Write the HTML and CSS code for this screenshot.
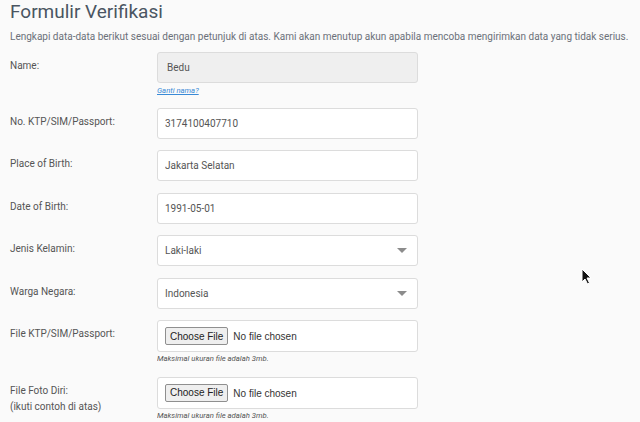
FILE: index.html
```html
<!DOCTYPE html>
<html lang="id">
<head>
<meta charset="utf-8">
<title>Formulir Verifikasi</title>
<link rel="stylesheet" href="styles.css">
</head>
<body>
<div class="page">
  <h1 class="title">Formulir Verifikasi</h1>
  <p class="lead">Lengkapi data-data berikut sesuai dengan petunjuk di atas. Kami akan menutup akun apabila mencoba mengirimkan data yang tidak serius.</p>
  <form class="form">
    <div class="row">
      <label class="label">Name:</label>
      <div class="field">
        <input class="input readonly" type="text" value="Bedu" readonly>
        <a class="help-link" href="#">Ganti nama?</a>
      </div>
    </div>
    <div class="row">
      <label class="label">No. KTP/SIM/Passport:</label>
      <div class="field"><input class="input" type="text" value="3174100407710"></div>
    </div>
    <div class="row">
      <label class="label">Place of Birth:</label>
      <div class="field"><input class="input" type="text" value="Jakarta Selatan"></div>
    </div>
    <div class="row">
      <label class="label">Date of Birth:</label>
      <div class="field"><input class="input" type="text" value="1991-05-01"></div>
    </div>
    <div class="row">
      <label class="label">Jenis Kelamin:</label>
      <div class="field">
        <div class="select"><span>Laki-laki</span><i class="caret"></i></div>
      </div>
    </div>
    <div class="row">
      <label class="label">Warga Negara:</label>
      <div class="field">
        <div class="select"><span>Indonesia</span><i class="caret"></i></div>
      </div>
    </div>
    <div class="row">
      <label class="label">File KTP/SIM/Passport:</label>
      <div class="field">
        <div class="filebox"><input type="file" class="file"></div>
        <div class="help">Maksimal ukuran file adalah 3mb.</div>
      </div>
    </div>
    <div class="row">
      <label class="label">File Foto Diri:<br>(ikuti contoh di atas)</label>
      <div class="field">
        <div class="filebox"><input type="file" class="file"></div>
        <div class="help">Maksimal ukuran file adalah 3mb.</div>
      </div>
    </div>
  </form>
</div>
<svg class="cursor" width="12" height="18" viewBox="0 0 12 18"><path d="M1 1 L1 14 L4 11 L6.5 16 L8.5 15 L6 10 L10 10 Z" fill="#111" stroke="#fff" stroke-width="1"/></svg>
</body>
</html>
```

FILE: styles.css
```css
html, body {
  margin: 0;
  padding: 0;
  background: #fafafa;
}
body {
  font-family: Roboto, "Noto Sans", sans-serif;
  font-size: 10px;
  color: #555;
  width: 640px;
  height: 422px;
  overflow: hidden;
  position: relative;
}
.page {
  padding: 0 10px;
}
.title {
  margin: 0;
  padding-top: 1px;
  font-size: 19px;
  line-height: 22px;
  font-weight: 400;
  color: #4a5562;
}
.lead {
  margin: 6px 0 0;
  font-size: 10px;
  line-height: 16px;
  color: #6b7079;
}
.form {
  margin-top: 7px;
  display: flex;
  flex-direction: column;
  gap: 11.5px;
}
.row {
  display: grid;
  grid-template-columns: 147px 261px;
  align-items: start;
}
.label {
  font-size: 10px;
  line-height: 16px;
  color: #555;
  padding-top: 6px;
}
.field {
  display: flex;
  flex-direction: column;
}
.input, .select {
  box-sizing: border-box;
  width: 261px;
  height: 31px;
  margin: 0;
  border: 1px solid #dcdcdc;
  border-radius: 3px;
  background: #fff;
  padding: 0 7px;
  font-family: Roboto, sans-serif;
  font-size: 10px;
  color: #555;
  outline: none;
}
.input.readonly {
  background: #efefef;
  padding-left: 9px;
}
.help-link {
  display: block;
  margin-top: 2px;
  height: 11px;
  font-size: 7.7px;
  line-height: 11px;
  font-style: italic;
  color: #3a8ad6;
}
.select {
  display: flex;
  align-items: center;
  justify-content: space-between;
  padding: 0 10px 0 7px;
}
.caret {
  width: 0;
  height: 0;
  border-left: 5px solid transparent;
  border-right: 5px solid transparent;
  border-top: 5px solid #8c8c8c;
}
.filebox {
  box-sizing: border-box;
  width: 261px;
  height: 32px;
  min-height: 0;
  overflow: hidden;
  border: 1px solid #dcdcdc;
  border-radius: 3px;
  background: #fff;
  display: flex;
  align-items: center;
  padding-left: 7px;
}
.file {
  font-family: "Liberation Sans", Arial, sans-serif;
  font-size: 10px;
  color: #333;
}
.file::file-selector-button {
  font-family: "Liberation Sans", Arial, sans-serif;
  font-size: 10px;
  height: 18px;
  padding: 0 4px;
  margin-right: 5px;
  border: 1px solid #8f8f8f;
  border-radius: 2px;
  background: #efefef;
  color: #222;
}
.help {
  margin-top: 1px;
  height: 12px;
  overflow: hidden;
  font-size: 7.7px;
  line-height: 12px;
  font-style: italic;
  color: #555;
}
.cursor {
  position: absolute;
  left: 581px;
  top: 268px;
}
```
